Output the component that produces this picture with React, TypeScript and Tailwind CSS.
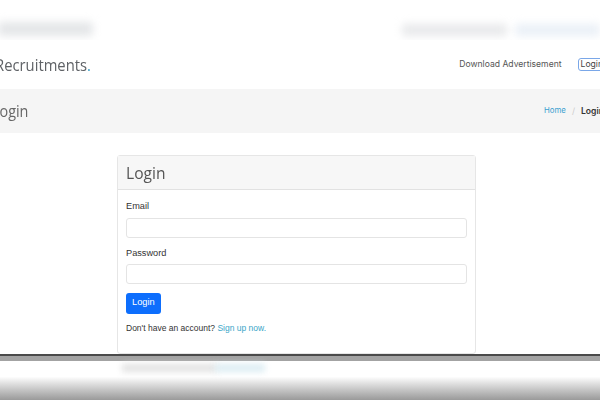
import React from "react";

const sans = { fontFamily: '"Liberation Sans", Arial, sans-serif' };
const open = { fontFamily: '"Open Sans", "Noto Sans", sans-serif' };
const nav = { fontFamily: 'Inter, "Noto Sans", sans-serif' };

const Field = ({ label, type, first }: { label: string; type: string; first?: boolean }) => (
  <div className={first ? "" : "mt-[9px]"}>
    <label className="block text-[9.2px] leading-[13px] text-[#333] mb-[4.5px]">{label}</label>
    <input
      type={type}
      className="block w-full h-[20px] border border-[#e4e4e4] rounded-[3px] bg-white outline-none"
    />
  </div>
);

const App = () => {
  return (
    <div className="relative w-[600px] h-[400px] overflow-hidden bg-white">
      {/* smeared frame above the header */}
      <div className="h-[40px] flex items-end justify-between pb-[4px] overflow-hidden">
        <div className="w-[95px] h-[14px] ml-[-2px] bg-[#e4e6e8] blur-[4px] rounded" />
        <div className="flex gap-[8px] items-center">
          <div className="w-[105px] h-[12px] bg-[#e8e9eb] blur-[4px] rounded" />
          <div className="w-[85px] h-[12px] bg-[#eaf0f7] blur-[4px] rounded" />
        </div>
      </div>

      {/* header */}
      <header className="h-[49px] flex items-center justify-between">
        <div
          className="ml-[-5px] inline-block scale-y-[1.12] origin-left text-[14.8px] text-[#5f6266]"
          style={open}
        >
          Recruitments<span className="text-[#3aa0c8]">.</span>
        </div>
        <nav className="flex items-center gap-[16px] mr-[-6px]" style={nav}>
          <a className="text-[8.6px] text-[#555]">Download Advertisement</a>
          <a className="text-[8.6px] text-[#444] border border-[#7aa7e8] rounded-[3px] px-[2px] leading-[11px]">
            Login
          </a>
        </nav>
      </header>

      {/* page title band */}
      <div className="h-[44px] bg-[#f5f5f5] flex items-center justify-between">
        <div className="ml-[-8px] inline-block scale-y-[1.1] text-[14.4px] text-[#666]" style={open}>
          Login
        </div>
        <div className="flex items-center gap-[6px] mr-[-4px] text-[8.6px]" style={nav}>
          <span className="text-[#3a9fd0] text-[7.8px]">Home</span>
          <span className="text-[#ccc]">/</span>
          <span className="text-[#333] font-semibold">Login</span>
        </div>
      </div>

      {/* login card */}
      <div className="pt-[22px] pl-[117px]" style={sans}>
        <div className="w-[359px] border border-[#e6e6e6] rounded-[3px]">
          <div className="h-[34px] bg-[#f7f7f7] border-b border-[#e2e2e2] px-[8px] flex items-center">
            <h3 className="inline-block scale-y-[1.1] text-[15.6px] text-[#555]" style={open}>
              Login
            </h3>
          </div>
          <div className="pt-[10px] px-[8px] pb-[18px]">
            <Field label="Email" type="email" first />
            <Field label="Password" type="password" />
            <button className="mt-[9px] h-[20.5px] px-[6px] bg-[#0d6efd] rounded-[3px] text-white text-[9.3px]">
              Login
            </button>
            <p className="mt-[8px] text-[8.5px] leading-[13px] text-[#333]">
              Don't have an account? <a className="text-[#3ba6c8]">Sign up now.</a>
            </p>
          </div>
        </div>
      </div>

      {/* bar and smear along the bottom edge */}
      <div className="absolute left-0 right-0 top-[354px] bottom-0">
        <div className="h-[2px] bg-[#4a4a4a]" />
        <div className="h-[5px] bg-[#a3a3a3]" />
        <div className="relative h-[39px] bg-gradient-to-b from-white via-white via-40% to-[#9a9a9a]">
          <div className="absolute left-[122px] top-[3px] w-[95px] h-[8px] bg-[#e2e2e2] blur-[3px]" />
          <div className="absolute left-[215px] top-[3px] w-[50px] h-[8px] bg-[#dcedf3] blur-[3px]" />
        </div>
      </div>
    </div>
  );
};

export default App;
